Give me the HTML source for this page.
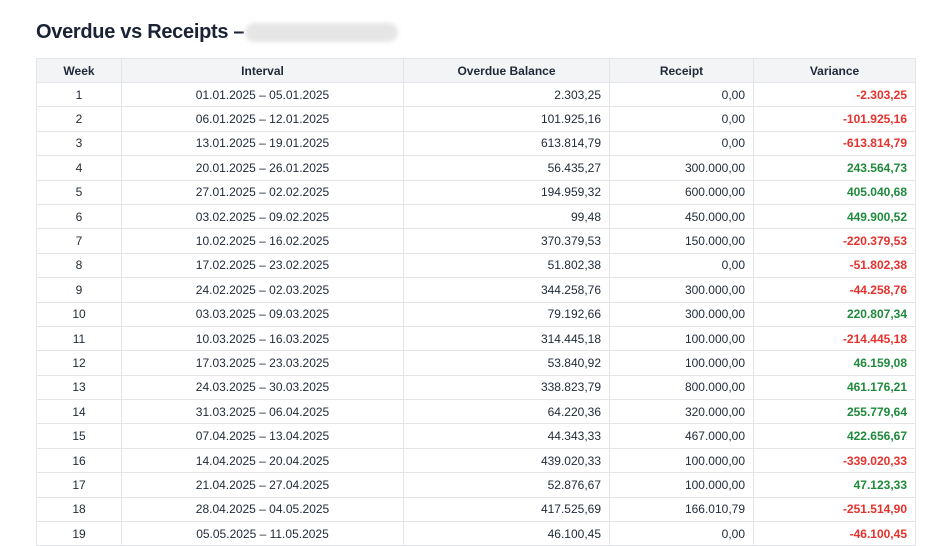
<!DOCTYPE html><html><head><style>
body{margin:0;background:#fff;font-family:"Liberation Sans",Arial,sans-serif;color:#1f2937;width:936px;height:536px;overflow:hidden;position:relative}
h1{position:absolute;left:36px;top:21px;margin:0;font-size:20px;font-weight:bold;color:#1a2233;letter-spacing:-0.3px}
.blur{position:absolute;left:245px;top:23px;width:153px;height:19px;border-radius:10px;background:#e6e6e6;filter:blur(2px)}
table{position:absolute;left:36px;top:58px;border-collapse:collapse;font-size:12px;width:880px}
td,th{border:1px solid #e3e5e8;height:23.4px;padding:0 8px}
th{background:#f3f4f6;font-weight:bold;color:#1f2937;height:23px}
td:nth-child(1),td:nth-child(2){text-align:center}
td:nth-child(n+3){text-align:right}
td:nth-child(5){font-weight:bold}
.r{color:#e5322d}.g{color:#1f8a3b}
</style></head><body>
<h1>Overdue vs Receipts –</h1><div class="blur"></div>
<table>
<colgroup><col style="width:85px"><col style="width:282px"><col style="width:206px"><col style="width:144px"><col style="width:162px"></colgroup>
<tr><th>Week</th><th>Interval</th><th>Overdue Balance</th><th>Receipt</th><th>Variance</th></tr>
<tr><td>1</td><td>01.01.2025 – 05.01.2025</td><td>2.303,25</td><td>0,00</td><td class="r">-2.303,25</td></tr>
<tr><td>2</td><td>06.01.2025 – 12.01.2025</td><td>101.925,16</td><td>0,00</td><td class="r">-101.925,16</td></tr>
<tr><td>3</td><td>13.01.2025 – 19.01.2025</td><td>613.814,79</td><td>0,00</td><td class="r">-613.814,79</td></tr>
<tr><td>4</td><td>20.01.2025 – 26.01.2025</td><td>56.435,27</td><td>300.000,00</td><td class="g">243.564,73</td></tr>
<tr><td>5</td><td>27.01.2025 – 02.02.2025</td><td>194.959,32</td><td>600.000,00</td><td class="g">405.040,68</td></tr>
<tr><td>6</td><td>03.02.2025 – 09.02.2025</td><td>99,48</td><td>450.000,00</td><td class="g">449.900,52</td></tr>
<tr><td>7</td><td>10.02.2025 – 16.02.2025</td><td>370.379,53</td><td>150.000,00</td><td class="r">-220.379,53</td></tr>
<tr><td>8</td><td>17.02.2025 – 23.02.2025</td><td>51.802,38</td><td>0,00</td><td class="r">-51.802,38</td></tr>
<tr><td>9</td><td>24.02.2025 – 02.03.2025</td><td>344.258,76</td><td>300.000,00</td><td class="r">-44.258,76</td></tr>
<tr><td>10</td><td>03.03.2025 – 09.03.2025</td><td>79.192,66</td><td>300.000,00</td><td class="g">220.807,34</td></tr>
<tr><td>11</td><td>10.03.2025 – 16.03.2025</td><td>314.445,18</td><td>100.000,00</td><td class="r">-214.445,18</td></tr>
<tr><td>12</td><td>17.03.2025 – 23.03.2025</td><td>53.840,92</td><td>100.000,00</td><td class="g">46.159,08</td></tr>
<tr><td>13</td><td>24.03.2025 – 30.03.2025</td><td>338.823,79</td><td>800.000,00</td><td class="g">461.176,21</td></tr>
<tr><td>14</td><td>31.03.2025 – 06.04.2025</td><td>64.220,36</td><td>320.000,00</td><td class="g">255.779,64</td></tr>
<tr><td>15</td><td>07.04.2025 – 13.04.2025</td><td>44.343,33</td><td>467.000,00</td><td class="g">422.656,67</td></tr>
<tr><td>16</td><td>14.04.2025 – 20.04.2025</td><td>439.020,33</td><td>100.000,00</td><td class="r">-339.020,33</td></tr>
<tr><td>17</td><td>21.04.2025 – 27.04.2025</td><td>52.876,67</td><td>100.000,00</td><td class="g">47.123,33</td></tr>
<tr><td>18</td><td>28.04.2025 – 04.05.2025</td><td>417.525,69</td><td>166.010,79</td><td class="r">-251.514,90</td></tr>
<tr><td>19</td><td>05.05.2025 – 11.05.2025</td><td>46.100,45</td><td>0,00</td><td class="r">-46.100,45</td></tr>
</table>
</body></html>
